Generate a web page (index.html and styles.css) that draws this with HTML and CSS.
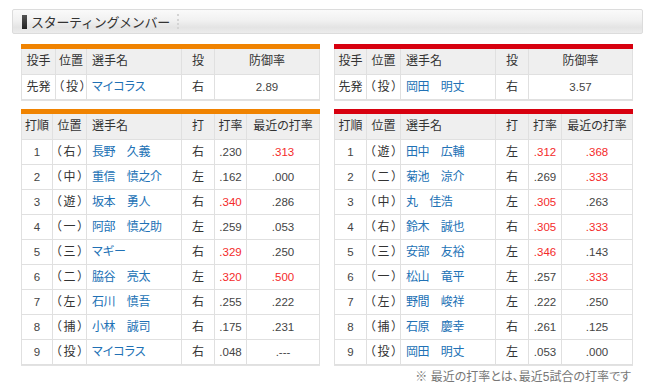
FILE: index.html
```html
<!DOCTYPE html>
<html lang="ja">
<head>
<meta charset="utf-8">
<link rel="stylesheet" href="styles.css">
</head>
<body>
<div class="title-bar">
  <span class="marker"></span>
  <span class="title">スターティングメンバー</span>
  <span class="sep"></span>
</div>

<div class="lineup">
  <div class="block">
    <div class="bar bar-orange"></div>
    <table class="tbl">
      <colgroup><col style="width:35px"><col style="width:31px"><col style="width:95px"><col style="width:33px"><col style="width:105px"></colgroup>
      <tr><th>投手</th><th>位置</th><th class="l">選手名</th><th>投</th><th>防御率</th></tr>
      <tr><td>先発</td><td class="pos">（投）</td><td class="l name kana">マイコラス</td><td>右</td><td class="num">2.89</td></tr>
    </table>
  </div>
  <div class="block">
    <div class="bar bar-red"></div>
    <table class="tbl">
      <colgroup><col style="width:33px"><col style="width:34px"><col style="width:95px"><col style="width:33px"><col style="width:104px"></colgroup>
      <tr><th>投手</th><th>位置</th><th class="l">選手名</th><th>投</th><th>防御率</th></tr>
      <tr><td>先発</td><td class="pos">（投）</td><td class="l name">岡田　明丈</td><td>右</td><td class="num">3.57</td></tr>
    </table>
  </div>

  <div class="block">
    <div class="bar bar-orange"></div>
    <table class="tbl">
      <colgroup><col style="width:32px"><col style="width:34px"><col style="width:95px"><col style="width:33px"><col style="width:32px"><col style="width:73px"></colgroup>
      <tr><th>打順</th><th>位置</th><th class="l">選手名</th><th>打</th><th>打率</th><th>最近の打率</th></tr>
      <tr><td class="num">1</td><td class="pos">（右）</td><td class="l name">長野　久義</td><td>右</td><td class="num">.230</td><td class="num red">.313</td></tr>
      <tr><td class="num">2</td><td class="pos">（中）</td><td class="l name">重信　慎之介</td><td>左</td><td class="num">.162</td><td class="num">.000</td></tr>
      <tr><td class="num">3</td><td class="pos">（遊）</td><td class="l name">坂本　勇人</td><td>右</td><td class="num red">.340</td><td class="num">.286</td></tr>
      <tr><td class="num">4</td><td class="pos">（一）</td><td class="l name">阿部　慎之助</td><td>左</td><td class="num">.259</td><td class="num">.053</td></tr>
      <tr><td class="num">5</td><td class="pos">（三）</td><td class="l name kana">マギー</td><td>右</td><td class="num red">.329</td><td class="num">.250</td></tr>
      <tr><td class="num">6</td><td class="pos">（二）</td><td class="l name">脇谷　亮太</td><td>左</td><td class="num red">.320</td><td class="num red">.500</td></tr>
      <tr><td class="num">7</td><td class="pos">（左）</td><td class="l name">石川　慎吾</td><td>右</td><td class="num">.255</td><td class="num">.222</td></tr>
      <tr><td class="num">8</td><td class="pos">（捕）</td><td class="l name">小林　誠司</td><td>右</td><td class="num">.175</td><td class="num">.231</td></tr>
      <tr><td class="num">9</td><td class="pos">（投）</td><td class="l name kana">マイコラス</td><td>右</td><td class="num">.048</td><td class="num">.---</td></tr>
    </table>
  </div>
  <div class="block">
    <div class="bar bar-red"></div>
    <table class="tbl">
      <colgroup><col style="width:33px"><col style="width:34px"><col style="width:95px"><col style="width:33px"><col style="width:33px"><col style="width:71px"></colgroup>
      <tr><th>打順</th><th>位置</th><th class="l">選手名</th><th>打</th><th>打率</th><th>最近の打率</th></tr>
      <tr><td class="num">1</td><td class="pos">（遊）</td><td class="l name">田中　広輔</td><td>左</td><td class="num red">.312</td><td class="num red">.368</td></tr>
      <tr><td class="num">2</td><td class="pos">（二）</td><td class="l name">菊池　涼介</td><td>右</td><td class="num">.269</td><td class="num red">.333</td></tr>
      <tr><td class="num">3</td><td class="pos">（中）</td><td class="l name">丸　佳浩</td><td>左</td><td class="num red">.305</td><td class="num">.263</td></tr>
      <tr><td class="num">4</td><td class="pos">（右）</td><td class="l name">鈴木　誠也</td><td>右</td><td class="num red">.305</td><td class="num red">.333</td></tr>
      <tr><td class="num">5</td><td class="pos">（三）</td><td class="l name">安部　友裕</td><td>左</td><td class="num red">.346</td><td class="num">.143</td></tr>
      <tr><td class="num">6</td><td class="pos">（一）</td><td class="l name">松山　竜平</td><td>左</td><td class="num">.257</td><td class="num red">.333</td></tr>
      <tr><td class="num">7</td><td class="pos">（左）</td><td class="l name">野間　峻祥</td><td>左</td><td class="num">.222</td><td class="num">.250</td></tr>
      <tr><td class="num">8</td><td class="pos">（捕）</td><td class="l name">石原　慶幸</td><td>右</td><td class="num">.261</td><td class="num">.125</td></tr>
      <tr><td class="num">9</td><td class="pos">（投）</td><td class="l name">岡田　明丈</td><td>左</td><td class="num">.053</td><td class="num">.000</td></tr>
    </table>
  </div>
</div>

<p class="note">※ 最近の打率とは、最近5試合の打率です</p>
</body>
</html>
```

FILE: styles.css
```css
html, body {
  margin: 0;
  padding: 0;
  background: #fff;
}
body {
  font-family: "Liberation Sans", "Noto Sans CJK JP", sans-serif;
  font-size: 12px;
  color: #333;
  font-feature-settings: "palt";
}
.title-bar {
  box-sizing: border-box;
  margin: 9px 0 0 12px;
  width: 631px;
  height: 25px;
  border: 1px solid #dcdcdc;
  border-radius: 2px;
  background: linear-gradient(to bottom, #fafafa 0%, #f1f1f1 45%, #e4e4e4 75%, #ececec 100%);
  display: flex;
  align-items: center;
  padding-left: 9px;
}
.marker {
  width: 5px;
  height: 14px;
  background: linear-gradient(to bottom, #555, #222);
  margin-right: 4px;
}
.title {
  font-family: "Noto Sans CJK JP", sans-serif;
  font-size: 13px;
  color: #333;
  line-height: 23px;
  font-feature-settings: normal;
  letter-spacing: -0.3px;
}
.sep {
  margin-left: 7px;
  height: 15px;
  border-left: 2px dotted #d4d4d4;
}
.lineup {
  display: grid;
  grid-template-columns: 299px 299px;
  column-gap: 14px;
  row-gap: 9px;
  margin: 10px 0 0 21px;
}
.bar {
  height: 5px;
}
.bar-orange { background: #f08300; }
.bar-red { background: #d7000f; }
.tbl {
  width: 299px;
  table-layout: fixed;
  border-collapse: separate;
  border-spacing: 0;
  box-shadow: 0 1px 0 #e2e2e2;
}
.tbl th, .tbl td {
  padding: 0;
  border-right: 1px solid #e0e0e0;
  border-bottom: 1px solid #e0e0e0;
  text-align: center;
  white-space: nowrap;
  overflow: hidden;
}
.tbl th:first-child, .tbl td:first-child {
  border-left: 1px solid #e0e0e0;
}
.tbl th {
  background: #efefef;
  font-weight: normal;
  line-height: 25px;
  font-size: 12px;
}
.tbl td {
  background: #fff;
  line-height: 24px;
}
.tbl .l {
  text-align: left;
  padding-left: 5px;
}
.tbl .pos {
  letter-spacing: 2px;
  text-indent: 2px;
}
.tbl .name {
  color: #2171b5;
  font-feature-settings: normal;
  letter-spacing: -0.4px;
}
.tbl .name.kana {
  font-feature-settings: "palt";
  letter-spacing: 0;
}
.tbl .num {
  font-size: 11.5px;
  color: #444;
}
.tbl .red {
  color: #f42a2a;
}
.note {
  margin: 4px 0 0 0;
  width: 631px;
  text-align: right;
  color: #777;
  font-size: 12px;
  line-height: 16px;
}
```
